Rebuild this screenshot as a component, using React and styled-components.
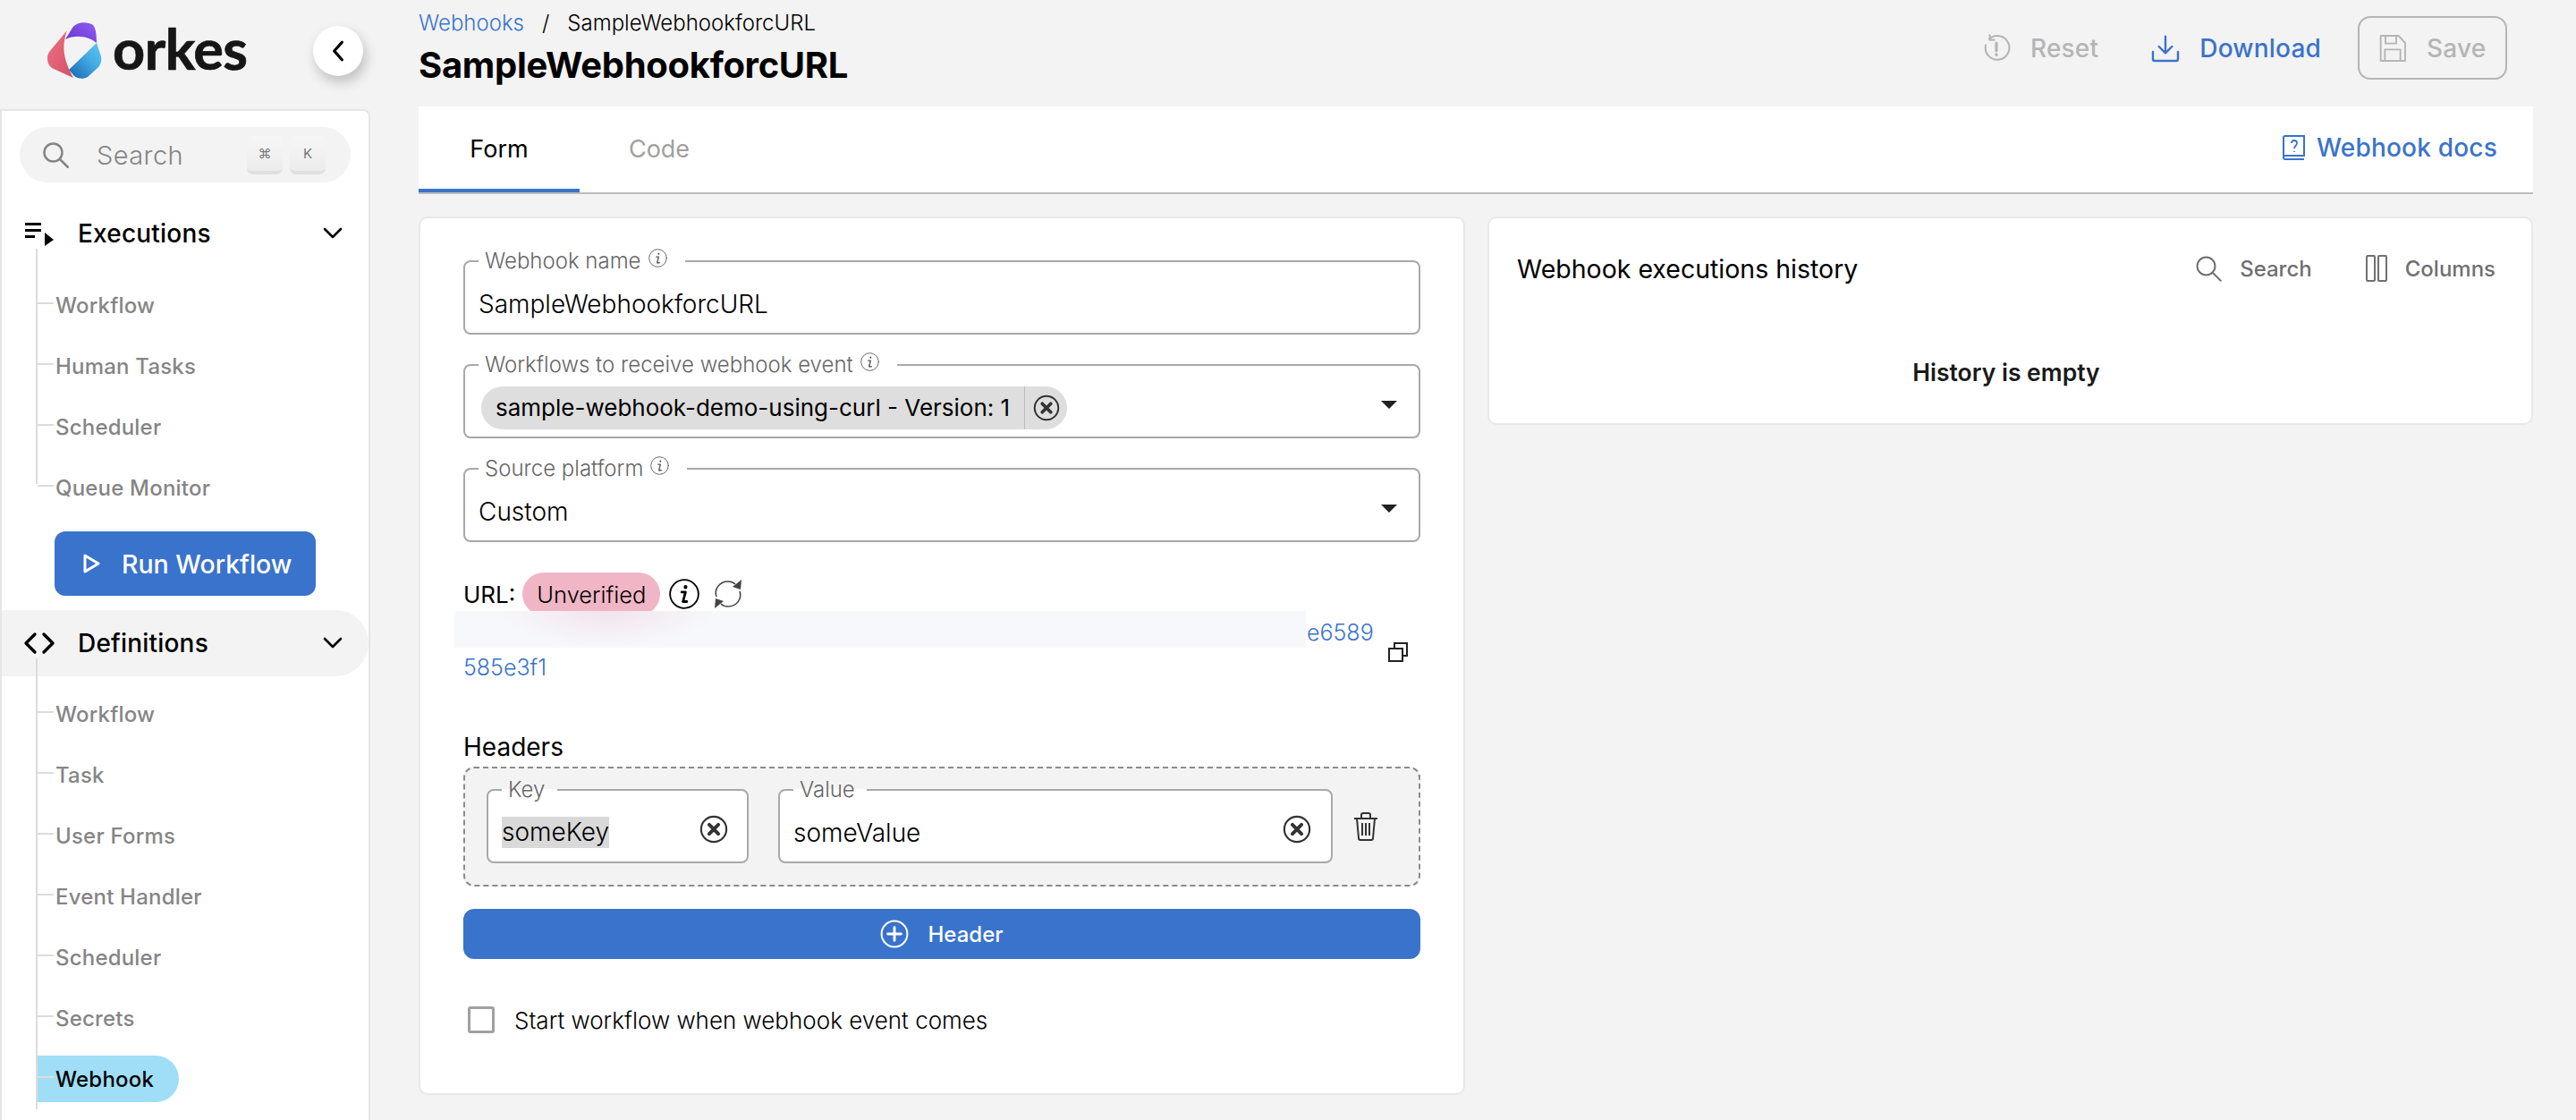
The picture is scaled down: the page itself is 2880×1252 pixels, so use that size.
import * as React from "react"
import styled, { createGlobalStyle } from "styled-components"

const GlobalStyle = createGlobalStyle`
    html, body {
        margin: 0;
        height: 100%;
        overflow: hidden;
        background: #f3f3f3;
    }
    * {
        box-sizing: border-box;
    }
    body {
        font-family: "Inter", "Liberation Sans", sans-serif;
        color: #000;
    }
`

const BLUE = "#3a73cc"

const Page = styled.div`
    display: grid;
    grid-template-columns: 414px 1fr;
    height: 1252px;
    overflow: hidden;
    background: #f3f3f3;
`

/* sidebar */

const Side = styled.aside`
    display: flex;
    flex-direction: column;
    min-height: 0;
`
const LogoRow = styled.div`
    height: 122px;
    flex: none;
    display: flex;
    align-items: center;
    padding: 0 0 8px 52px;
`
const LogoText = styled.span`
    font-family: "Lato", sans-serif;
    font-weight: 700;
    font-size: 63px;
    line-height: 66px;
    letter-spacing: -0.5px;
    -webkit-text-stroke: 0.7px #161616;
    color: #161616;
    margin-left: 12px;
    margin-top: -6px;
`
const CollapseButton = styled.div`
    width: 56px;
    height: 56px;
    margin-left: 73px;
    border-radius: 50%;
    background: #fff;
    box-shadow: 3px 7px 14px rgba(0, 0, 0, 0.22);
    display: flex;
    align-items: center;
    justify-content: center;
`
const SideCard = styled.div`
    flex: 1;
    min-height: 0;
    background: #fff;
    border: 2px solid #e6e6e6;
    border-bottom: 0;
    border-radius: 0 8px 0 0;
    padding-top: 18px;
    overflow: hidden;
`
const SearchBox = styled.div`
    margin-left: 20px;
    width: 370px;
    height: 62px;
    border-radius: 31px;
    background: #f3f3f3;
    display: flex;
    align-items: center;
    padding: 0 28px 0 25px;
    color: #858585;
    font-size: 29px;
    font-weight: 300;
`
const SearchLabel = styled.span`
    margin-left: 31px;
    flex: 1;
    letter-spacing: 0.4px;
`
const KeyCap = styled.span`
    width: 40px;
    height: 43px;
    margin-left: 8px;
    border-radius: 7px;
    background: linear-gradient(#f6f6f6, #ececec);
    border-bottom: 4px solid #e0e0e0;
    display: flex;
    align-items: center;
    justify-content: center;
    font-size: 15px;
    font-weight: 400;
    color: #777;
`
const GroupRow = styled.div`
    height: 74px;
    margin-top: ${p => p.$top}px;
    display: flex;
    align-items: center;
    padding: 0 28px 0 24px;
    background: ${p => (p.$active ? "#f3f3f3" : "transparent")};
    border-radius: 0 37px 37px 0;
`
const GroupIcon = styled.span`
    width: 36px;
    display: flex;
    align-items: center;
    justify-content: center;
`
const GroupLabel = styled.span`
    margin-left: 25px;
    flex: 1;
    font-size: 28px;
    font-weight: 500;
    letter-spacing: 0.2px;
`
const SubList = styled.ul`
    position: relative;
    list-style: none;
    margin: 0;
    padding: ${p => p.$top}px 0 0 40px;
    &::before {
        content: "";
        position: absolute;
        left: 38px;
        top: -20px;
        bottom: ${p => p.$lineEnd}px;
        width: 2px;
        background: #dcdcdc;
    }
`
const SubItem = styled.li`
    position: relative;
    height: 68px;
    display: flex;
    align-items: center;
    font-size: 24px;
    font-weight: 500;
    color: #858585;
    letter-spacing: 0.2px;
    &::before {
        content: "";
        position: absolute;
        left: 0;
        top: 31px;
        width: 18px;
        height: 2px;
        background: #dcdcdc;
        z-index: 1;
    }
`
const SubText = styled.span`
    height: 52px;
    display: flex;
    align-items: center;
    padding: 0 28px 0 20px;
    border-radius: 0 26px 26px 0;
    background: ${p => (p.$active ? "#a0def7" : "transparent")};
    color: ${p => (p.$active ? "#000" : "inherit")};
`
const RunButton = styled.div`
    width: 292px;
    height: 72px;
    margin: 15px 0 0 59px;
    border-radius: 12px;
    background: ${BLUE};
    color: #fff;
    display: flex;
    align-items: center;
    padding-left: 29px;
    gap: 22px;
    font-size: 28.5px;
    font-weight: 500;
`

/* main column */

const Main = styled.main`
    padding: 0 48px 0 54px;
    min-width: 0;
`
const TopBar = styled.header`
    height: 119px;
    display: flex;
    justify-content: space-between;
`
const TitleBlock = styled.div`
    padding-top: 10px;
`
const Crumbs = styled.div`
    height: 30px;
    display: flex;
    align-items: center;
    font-size: 24px;
    font-weight: 300;
`
const CrumbLink = styled.span`
    color: ${BLUE};
`
const CrumbSep = styled.span`
    margin: 0 20px;
`
const PageTitle = styled.h1`
    margin: 8px 0 0;
    font-size: 40px;
    line-height: 50px;
    font-weight: 700;
    letter-spacing: -0.3px;
`
const Actions = styled.div`
    display: flex;
    align-items: center;
    gap: 41px;
    height: 71px;
    margin-top: 18px;
    padding-right: 29px;
`
const Action = styled.div`
    display: flex;
    align-items: center;
    gap: 22px;
    font-size: 28px;
    font-weight: 500;
    letter-spacing: 0.2px;
    color: ${p => (p.$on ? BLUE : "#b5b5b5")};
    margin-right: ${p => p.$after || 0}px;
`
const SaveButton = styled(Action)`
    width: 167px;
    height: 71px;
    padding-left: 21px;
    border: 2px solid #b5b5b5;
    border-radius: 14px;
`
const TabBar = styled.nav`
    height: 98px;
    background: #fff;
    border-bottom: 2px solid #bdbdbd;
    display: flex;
    align-items: stretch;
`
const Tab = styled.div`
    width: ${p => p.$w}px;
    padding-top: 2px;
    display: flex;
    align-items: center;
    justify-content: center;
    font-size: 27px;
    font-weight: 400;
    color: ${p => (p.$on ? "#000" : "#a0a0a0")};
    border-bottom: 4px solid ${p => (p.$on ? BLUE : "transparent")};
`
const DocsLink = styled.div`
    margin-left: auto;
    padding: 0 40px 4px 0;
    display: flex;
    align-items: center;
    gap: 12px;
    font-size: 28px;
    font-weight: 500;
    letter-spacing: 0.2px;
    color: ${BLUE};
`
const Panels = styled.div`
    display: grid;
    grid-template-columns: 1170px 1169px;
    gap: 25px;
    align-items: start;
    padding-top: 25px;
`
const Card = styled.section`
    background: #fff;
    border: 2px solid #e8e8e8;
    border-radius: 10px;
`
const FormCard = styled(Card)`
    height: 982px;
    padding: 35px 48px 0 48px;
`

/* form fields */

const Field = styled.fieldset`
    margin: ${p => p.$top || 0}px 0 0;
    min-width: 0;
    width: ${p => p.$w || "auto"};
    flex: ${p => (p.$w ? "none" : "1")};
    height: 95px;
    padding: 2px ${p => p.$right || 18}px 0 ${p => p.$left || 15}px;
    border: 2px solid #a8a8a8;
    border-radius: 8px;
    background: #fff;
    display: flex;
    align-items: center;
    justify-content: space-between;
    font-size: 28px;
    font-weight: 300;
`
const Legend = styled.legend`
    margin-left: ${p => p.$shift || 0}px;
    padding: 0 ${p => p.$pad ?? 20}px 0 7px;
    height: 26px;
    display: flex;
    align-items: center;
    gap: 8px;
    font-size: 24px;
    line-height: 26px;
    font-weight: 300;
    color: #666;
`
const LegendInfo = styled.span`
    display: flex;
    margin-top: -7px;
`
const Chip = styled.div`
    height: 48px;
    border-radius: 24px;
    background: #dedede;
    display: flex;
    align-items: center;
    padding-left: 16px;
    font-size: 26px;
    font-weight: 400;
`
const ChipClear = styled.span`
    height: 48px;
    margin-left: 16px;
    width: 48px;
    border-left: 1px solid #bdbdbd;
    display: flex;
    align-items: center;
    justify-content: center;
`
const CaretSlot = styled.span`
    display: flex;
    margin-top: -6px;
`
const Selected = styled.span`
    background: #d9d9d9;
    line-height: 35px;
`
const UrlRow = styled.div`
    margin-top: 34px;
    height: 48px;
    display: flex;
    align-items: center;
    font-size: 26px;
    font-weight: 400;
`
const StatusPill = styled.span`
    height: 48px;
    margin: 0 10px 0 8px;
    padding: 0 16px;
    border-radius: 24px;
    background: #f0b6c5;
    display: flex;
    align-items: center;
    font-size: 25.500px;
    font-weight: 300;
`
const RefreshSlot = styled.span`
    display: flex;
    margin-left: 15px;
`
const UrlBlock = styled.div`
    position: relative;
    font-size: 25px;
    line-height: 39px;
    font-weight: 300;
    color: ${BLUE};
`
const UrlLine = styled.div`
    display: flex;
    height: 39px;
    align-items: center;
`
const Redacted = styled.div`
    width: 952px;
    height: 41px;
    margin: -8px 1px 0 -10px;
    background:
        radial-gradient(ellipse 120px 40px at 170px 0, rgba(230, 190, 205, 0.35), transparent),
        #f7f8fc;
`
const CopySlot = styled.span`
    position: absolute;
    left: 1033px;
    top: 29px;
    display: flex;
`
const HeadersTitle = styled.div`
    margin-top: 54px;
    font-size: 28px;
    line-height: 30px;
    font-weight: 400;
`
const HeaderBox = styled.div`
    margin-top: 7px;
    height: 134px;
    padding: 11px 24px 0;
    border: 2px dashed #8c8c8c;
    border-radius: 12px;
    background: #f3f3f3;
    display: flex;
    gap: 33px;
`
const ClearSlot = styled.span`
    display: flex;
    margin: -8px ${p => p.$nudge || 0}px 0 0;
`
const TrashSlot = styled.span`
    display: flex;
    align-items: center;
    margin: 0 0 12px -11px;
`
const AddButton = styled.div`
    margin-top: 25px;
    height: 56px;
    border-radius: 12px;
    background: ${BLUE};
    color: #fff;
    display: flex;
    align-items: center;
    justify-content: center;
    gap: 21px;
    font-size: 24px;
    font-weight: 500;
`
const CheckRow = styled.label`
    margin: 53px 0 0 5px;
    height: 30px;
    display: flex;
    align-items: center;
    gap: 22px;
    font-size: 26px;
    font-weight: 300;
`
const CheckBox = styled.span`
    width: 30px;
    height: 30px;
    border: 3px solid #a0a0a0;
    border-radius: 3px;
`

/* history panel */

const HistoryCard = styled(Card)`
    height: 233px;
    padding: 36px 40px 0 31px;
`
const HistoryHead = styled.div`
    height: 40px;
    display: flex;
    align-items: center;
`
const HistoryTitle = styled.h2`
    flex: 1;
    margin: 0;
    font-size: 28.500px;
    font-weight: 400;
`
const ToolLink = styled.div`
    display: flex;
    align-items: center;
    gap: 20px;
    margin-left: ${p => p.$left || 0}px;
    font-size: 24px;
    font-weight: 500;
    color: #707070;
`
const EmptyNote = styled.div`
    margin-top: 76px;
    text-align: center;
    font-size: 26.500px;
    line-height: 40px;
    font-weight: 600;
    color: #1a1a1a;
`

/* drawings */

const OrkesMark = () => (
    <svg width="62" height="64" viewBox="0 0 62 64">
        <defs>
            <linearGradient id="orkesPink" x1="0" y1="0" x2="1" y2="1">
                <stop offset="0" stopColor="#f0707f" />
                <stop offset="1" stopColor="#cf5268" />
            </linearGradient>
            <linearGradient id="orkesPurple" x1="0" y1="1" x2="1" y2="0">
                <stop offset="0" stopColor="#6a34c8" />
                <stop offset="1" stopColor="#8f5cf8" />
            </linearGradient>
            <linearGradient id="orkesBlue" x1="0" y1="1" x2="1" y2="0">
                <stop offset="0" stopColor="#1465ab" />
                <stop offset="0.6" stopColor="#46ace6" />
                <stop offset="1" stopColor="#5fc6f2" />
            </linearGradient>
        </defs>
        <path d="M23 9 L3 33 C-1 39 1 49 8 52 L30 62 C24 50 14 33 23 9 Z" fill="url(#orkesPink)" />
        <path d="M21 19 L29 6 C34 -1 46 -1 52 3 C55 6 56 14 56 23 C48 16 33 13 21 19 Z" fill="url(#orkesPurple)" />
        <path d="M56 23 L61 38 C62 44 60 49 56 52 L46 61 C41 64 35 63 31 60 L25 53 Z" fill="url(#orkesBlue)" />
    </svg>
)

const Svg = ({ size = 24, box = 24, color = "currentColor", width = 2, children }) => (
    <svg width={size} height={size} viewBox={`0 0 ${box} ${box}`} fill="none" stroke={color} strokeWidth={width} strokeLinecap="round" strokeLinejoin="round">
        {children}
    </svg>
)

const SearchGlyph = ({ size, color, width }) => (
    <Svg size={size} color={color} width={width}>
        <circle cx="10" cy="10" r="8" />
        <path d="M16 16l7 7" />
    </Svg>
)

const Chevron = () => (
    <Svg size={24}><path d="M3 7l9 9 9-9" strokeWidth="2.6" /></Svg>
)

const InfoIcon = ({ size = 21, color = "#555", width = 1 }) => (
    <Svg size={size} color={color} width={width}>
        <circle cx="12" cy="12" r="11.200" />
        <path d="M10 10.500h3l-2 7.500h3" strokeWidth={width * 1.5} />
        <path d="M13 6.300v.4" strokeWidth={width * 2.2} />
    </Svg>
)

const LegendHint = () => (
    <LegendInfo><InfoIcon /></LegendInfo>
)

const ClearIcon = ({ size = 32 }) => (
    <Svg size={size} color="#333" width={1.6}>
        <circle cx="12" cy="12" r="10.600" />
        <path d="M8.200 8.200l7.600 7.600M15.800 8.200l-7.600 7.600" strokeWidth="3" />
    </Svg>
)

const Caret = () => (
    <CaretSlot>
        <svg width="18" height="9" viewBox="0 0 18 9"><path d="M0 0h18l-9 9z" fill="#222" /></svg>
    </CaretSlot>
)

export default function App() {
    return (
        <Page>
            <GlobalStyle />
            <Side>
                <LogoRow>
                    <OrkesMark />
                    <LogoText>orkes</LogoText>
                    <CollapseButton>
                        <Svg size={26}><path d="M16 3l-8 9 8 9" strokeWidth="3" /></Svg>
                    </CollapseButton>
                </LogoRow>
                <SideCard>
                    <SearchBox>
                        <SearchGlyph size={30} color="#858585" />
                        <SearchLabel>Search</SearchLabel>
                        <KeyCap>⌘</KeyCap>
                        <KeyCap>K</KeyCap>
                    </SearchBox>
                    <GroupRow $top={20}>
                        <GroupIcon>
                            <svg width="32" height="28" viewBox="0 0 32 28">
                                <path d="M0 2h18v3H0zM0 9h18v3H0zM0 16h11v3H0z" fill="#000" />
                                <path d="M22 13l10 8-10 7z" fill="#000" />
                            </svg>
                        </GroupIcon>
                        <GroupLabel>Executions</GroupLabel>
                        <Chevron />
                    </GroupRow>
                    <SubList $top={9} $lineEnd={38}>
                        <SubItem><SubText>Workflow</SubText></SubItem>
                        <SubItem><SubText>Human Tasks</SubText></SubItem>
                        <SubItem><SubText>Scheduler</SubText></SubItem>
                        <SubItem><SubText>Queue Monitor</SubText></SubItem>
                    </SubList>
                    <RunButton>
                        <Svg size={24} width={3}><path d="M5 3l15 9-15 9z" /></Svg>
                        Run Workflow
                    </RunButton>
                    <GroupRow $top={16} $active>
                        <GroupIcon>
                            <Svg size={36} box={36} width={3.4}>
                                <path d="M13 8L3 18l10 10M23 8l10 10-10 10" />
                            </Svg>
                        </GroupIcon>
                        <GroupLabel>Definitions</GroupLabel>
                        <Chevron />
                    </GroupRow>
                    <SubList $top={8} $lineEnd={0}>
                        <SubItem><SubText>Workflow</SubText></SubItem>
                        <SubItem><SubText>Task</SubText></SubItem>
                        <SubItem><SubText>User Forms</SubText></SubItem>
                        <SubItem><SubText>Event Handler</SubText></SubItem>
                        <SubItem><SubText>Scheduler</SubText></SubItem>
                        <SubItem><SubText>Secrets</SubText></SubItem>
                        <SubItem><SubText $active>Webhook</SubText></SubItem>
                    </SubList>
                </SideCard>
            </Side>
            <Main>
                <TopBar>
                    <TitleBlock>
                        <Crumbs>
                            <CrumbLink>Webhooks</CrumbLink>
                            <CrumbSep>/</CrumbSep>
                            <span>SampleWebhookforcURL</span>
                        </Crumbs>
                        <PageTitle>SampleWebhookforcURL</PageTitle>
                    </TitleBlock>
                    <Actions>
                        <Action $after={18}>
                            <Svg size={32} width={1.6}>
                                <path d="M6 4.200A10 10 0 1 1 3 9.500" />
                                <path d="M6.500 1v4H10" />
                                <path d="M12 7.500v6.500M12 17v.6" strokeWidth="2.400" />
                            </Svg>
                            Reset
                        </Action>
                        <Action $on>
                            <Svg size={32} width={1.8}>
                                <path d="M12 2v14M6.500 10.500L12 16l5.500-5.500" />
                                <path d="M1.500 15v6c0 1 .5 1.500 1.500 1.500h18c1 0 1.500-.5 1.500-1.500v-6" />
                            </Svg>
                            Download
                        </Action>
                        <SaveButton>
                            <Svg size={32} width={1.4}>
                                <path d="M2 1.500h15l5.500 6v15H2z" />
                                <path d="M6 1.500v6.500h9V1.500M5.500 22.500V13h13v9.500" />
                            </Svg>
                            Save
                        </SaveButton>
                    </Actions>
                </TopBar>
                <TabBar>
                    <Tab $w={180} $on>Form</Tab>
                    <Tab $w={178}>Code</Tab>
                    <DocsLink>
                        <svg width="26" height="28" viewBox="0 0 26 28" fill="none" stroke={BLUE} strokeWidth="2">
                            <path d="M1 24V3c0-1 1-2 2-2h21v22H3c-1 0-2 1-2 2s1 2 2 2h21" />
                            <path d="M10 9c0-4 6-4 6 0 0 3-3 3-3 6M13 18v1" strokeWidth="1.800" />
                        </svg>
                        Webhook docs
                    </DocsLink>
                </TabBar>
                <Panels>
                    <FormCard>
                        <Field>
                            <Legend>Webhook name <LegendHint /></Legend>
                            SampleWebhookforcURL
                        </Field>
                        <Field $top={21} $left={18} $right={24}>
                            <Legend $shift={-3}>Workflows to receive webhook event <LegendHint /></Legend>
                            <Chip>
                                sample-webhook-demo-using-curl - Version: 1
                                <ChipClear><ClearIcon size={30} /></ChipClear>
                            </Chip>
                            <Caret />
                        </Field>
                        <Field $top={21} $right={24}>
                            <Legend>Source platform <LegendHint /></Legend>
                            Custom
                            <Caret />
                        </Field>
                        <UrlRow>
                            URL:
                            <StatusPill>Unverified</StatusPill>
                            <InfoIcon size={34} color="#000" width={1.300} />
                            <RefreshSlot>
                                <svg width="34" height="34" viewBox="0 0 34 34" fill="none" stroke="#444" strokeWidth="1.600">
                                    <path d="M4 20C1 11 8 3 17 3c3 0 6 1 8 3" />
                                    <path d="M30 14c3 9-4 17-13 17-3 0-6-1-8-3" />
                                    <path d="M32 1l-1 11-9-3zM2 33l1-11 9 3z" fill="#444" stroke="none" />
                                </svg>
                            </RefreshSlot>
                        </UrlRow>
                        <UrlBlock>
                            <UrlLine>
                                <Redacted />
                                e6589
                            </UrlLine>
                            <UrlLine>585e3f1</UrlLine>
                            <CopySlot>
                                <svg width="24" height="24" viewBox="0 0 24 24" fill="none" stroke="#222" strokeWidth="2">
                                    <path d="M8 7V2h14v14h-5" />
                                    <path d="M2 8h15v14H2z" />
                                </svg>
                            </CopySlot>
                        </UrlBlock>
                        <HeadersTitle>Headers</HeadersTitle>
                        <HeaderBox>
                            <Field $w="293px" $right={21}>
                                <Legend $pad={14}>Key</Legend>
                                <Selected>someKey</Selected>
                                <ClearSlot><ClearIcon /></ClearSlot>
                            </Field>
                            <Field $w="620px" $right={22}>
                                <Legend $pad={13}>Value</Legend>
                                someValue
                                <ClearSlot><ClearIcon /></ClearSlot>
                            </Field>
                            <TrashSlot>
                                <svg width="30" height="32" viewBox="0 0 30 32" fill="none" stroke="#333" strokeWidth="2">
                                    <path d="M2 7h26M10 7V3c0-1 1-2 2-2h6c1 0 2 1 2 2v4" />
                                    <path d="M5 7l2 22c0 1 1 2 2 2h12c1 0 2-1 2-2l2-22" />
                                    <path d="M11 12v14M15 12v14M19 12v14" />
                                </svg>
                            </TrashSlot>
                        </HeaderBox>
                        <AddButton>
                            <Svg size={32} color="#fff" width={1.500}>
                                <circle cx="12" cy="12" r="10.800" />
                                <path d="M12 6.500v11M6.500 12h11" strokeWidth="2.200" />
                            </Svg>
                            Header
                        </AddButton>
                        <CheckRow>
                            <CheckBox />
                            Start workflow when webhook event comes
                        </CheckRow>
                    </FormCard>
                    <HistoryCard>
                        <HistoryHead>
                            <HistoryTitle>Webhook executions history</HistoryTitle>
                            <ToolLink>
                                <SearchGlyph size={30} color="#707070" width={1.6} />
                                Search
                            </ToolLink>
                            <ToolLink $left={60}>
                                <svg width="24" height="30" viewBox="0 0 24 30" fill="none" stroke="#707070" strokeWidth="2">
                                    <rect x="1" y="1" width="9" height="28" rx="1" />
                                    <rect x="14" y="1" width="9" height="28" rx="1" />
                                </svg>
                                Columns
                            </ToolLink>
                        </HistoryHead>
                        <EmptyNote>History is empty</EmptyNote>
                    </HistoryCard>
                </Panels>
            </Main>
        </Page>
    )
}
